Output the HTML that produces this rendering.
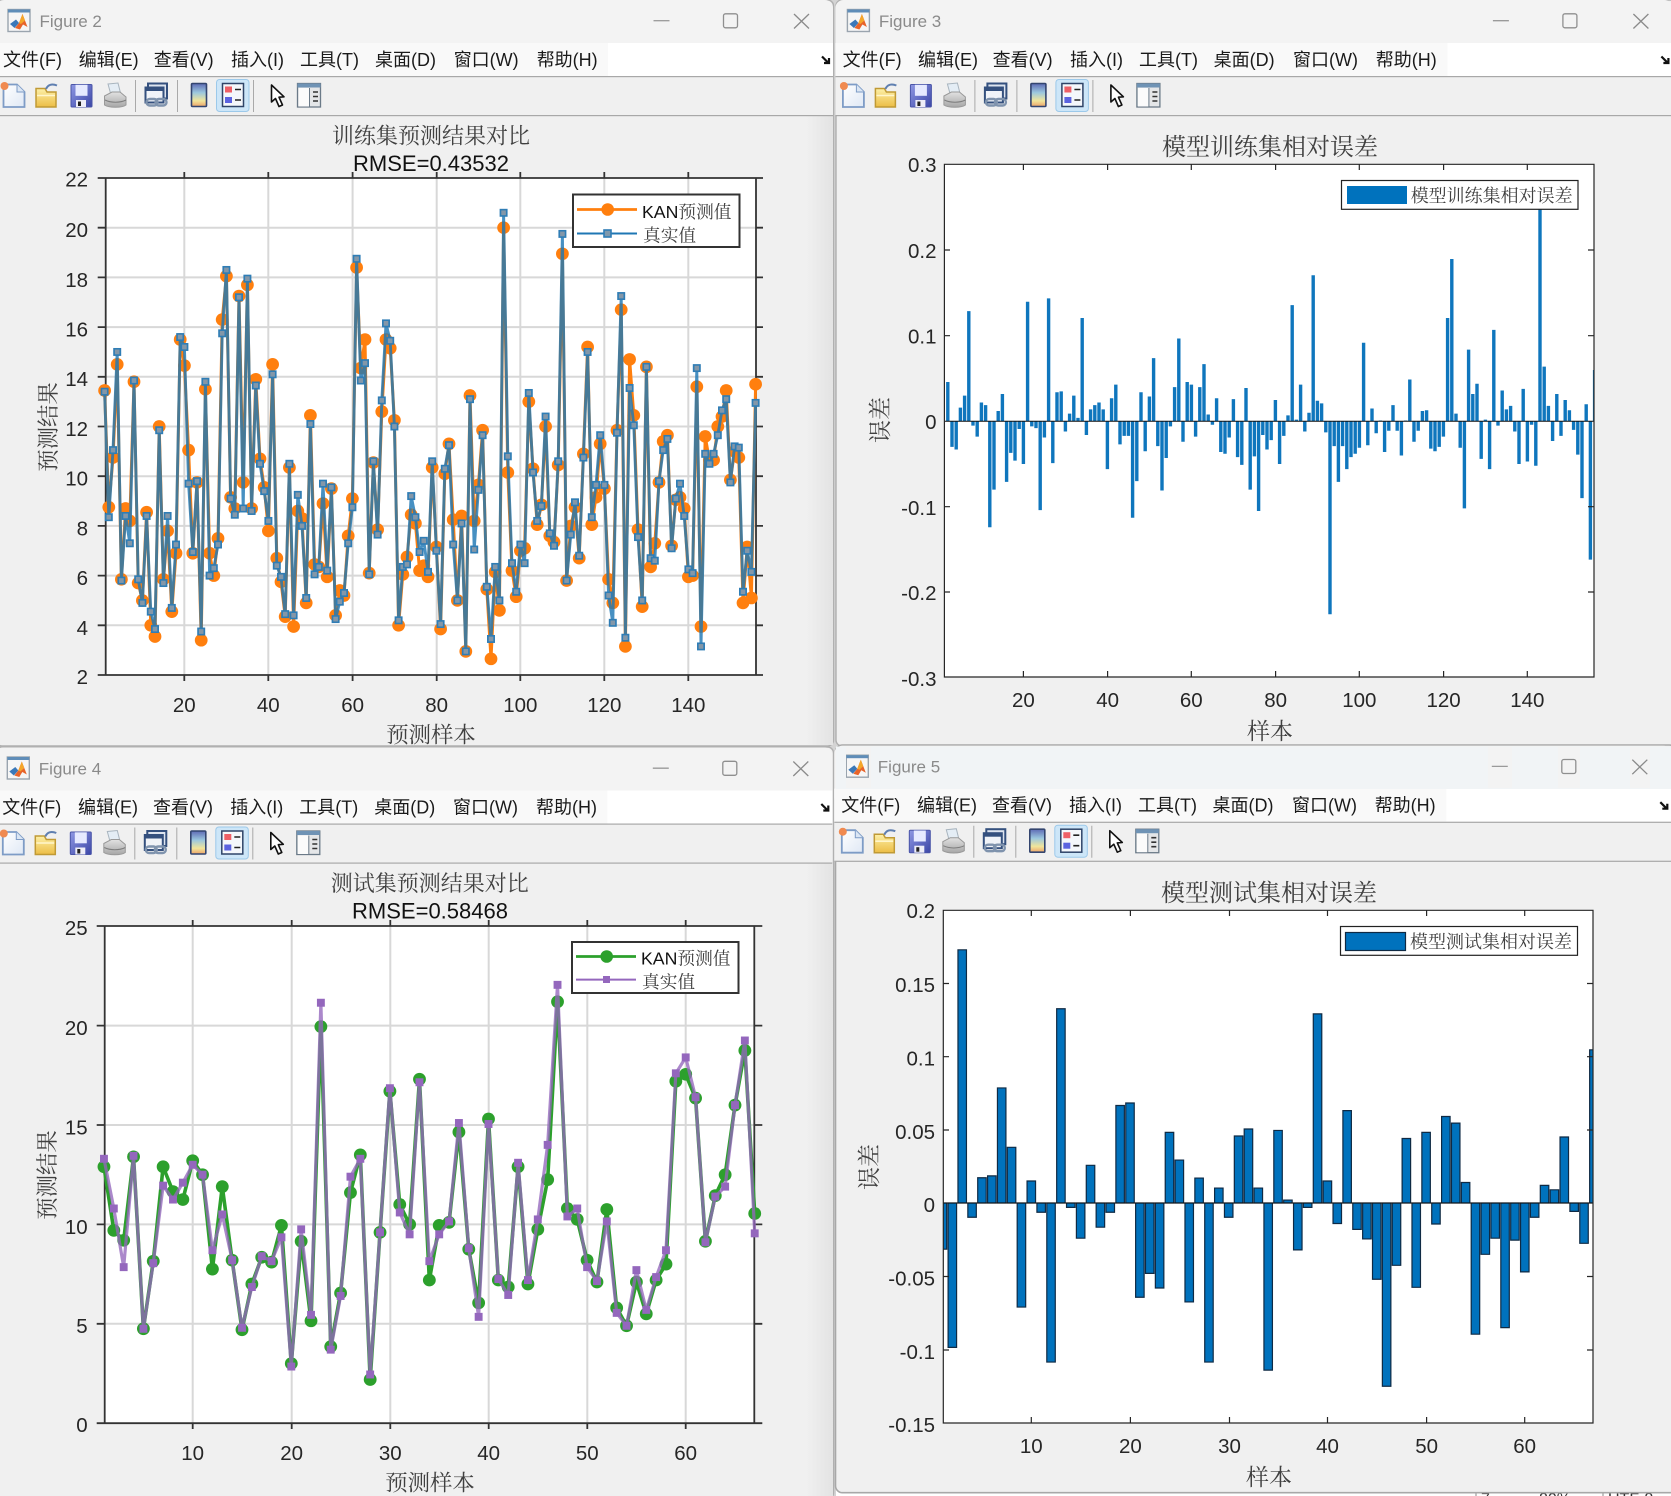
<!DOCTYPE html>
<html lang="zh">
<head>
<meta charset="utf-8">
<title>Figures</title>
<style>
html,body{margin:0;padding:0;background:#d4d4d4}
svg{display:block}
.tk{font:20.5px "Liberation Sans",sans-serif;fill:#262626}
.m{font:18px "Liberation Sans","Noto Sans CJK SC",sans-serif;fill:#1a1a1a}
.ft{font:17px "Liberation Sans",sans-serif;fill:#8a8a8a}
.s{font-family:"Liberation Serif","Noto Serif CJK SC",serif;fill:#404040}
.t{font-size:22px}
.T{font-size:24px}
.r{font:22px "Liberation Sans",sans-serif;fill:#111}
.l{font-size:22.4px}
.L{font-size:23px}
.lg{font-size:17.7px}
.lG{font-size:18px}
.k{font-family:"Liberation Sans",sans-serif;fill:#111}
.e{text-anchor:end}
.c{text-anchor:middle}
.v{vector-effect:non-scaling-stroke}
.b{font:16px "Liberation Sans",sans-serif;fill:#333}
</style>
</head>
<body>
<svg width="1671" height="1496" viewBox="0 0 1671 1496" xmlns="http://www.w3.org/2000/svg">
<defs>
<linearGradient id="cb" x1="0" y1="0" x2="0" y2="1"><stop offset="0" stop-color="#5e6bb5"/><stop offset=".4" stop-color="#9cc8de"/><stop offset=".75" stop-color="#f1e59a"/><stop offset="1" stop-color="#eda46a"/></linearGradient>
<linearGradient id="fl" x1="0" y1="0" x2="0" y2="1"><stop offset="0" stop-color="#fdf0a8"/><stop offset="1" stop-color="#ecbd45"/></linearGradient>
<linearGradient id="sv" x1="0" y1="0" x2="1" y2="1"><stop offset="0" stop-color="#8f98e4"/><stop offset="1" stop-color="#3b46a6"/></linearGradient>
<linearGradient id="shade" x1="0" y1="0" x2="1" y2="0"><stop offset="0" stop-color="#f0f0f0"/><stop offset="1" stop-color="#e3e3e3"/></linearGradient>
<linearGradient id="pr" x1="0" y1="0" x2="0" y2="1"><stop offset="0" stop-color="#e2e2e2"/><stop offset="1" stop-color="#a6a6a6"/></linearGradient>
<linearGradient id="nw" x1="0" y1="0" x2="1" y2="1"><stop offset="0" stop-color="#ffffff"/><stop offset="1" stop-color="#dfe8f5"/></linearGradient>
<marker id="co" markerUnits="userSpaceOnUse" overflow="visible" markerWidth="1" markerHeight="1" refX="0" refY="0"><ellipse rx="1.52" ry=".255" fill="#ff7f0e"/></marker>
<marker id="sb" markerUnits="userSpaceOnUse" overflow="visible" markerWidth="1" markerHeight="1" refX="0" refY="0"><rect x="-.95" y="-.16" width="1.9" height=".32" fill="#2f7db5"/><rect x="-.55" y="-.095" width="1.1" height=".19" fill="#8497a8"/></marker>
<marker id="cg" markerUnits="userSpaceOnUse" overflow="visible" markerWidth="1" markerHeight="1" refX="0" refY="0"><ellipse rx=".65" ry=".32" fill="#2ca02c"/></marker>
<marker id="sp" markerUnits="userSpaceOnUse" overflow="visible" markerWidth="1" markerHeight="1" refX="0" refY="0"><rect x="-.4" y="-.2" width=".8" height=".4" fill="#9467bd"/></marker>
<clipPath id="c3"><rect x="944.4" y="164.3" width="649.6" height="512.7"/></clipPath>
<clipPath id="c5"><rect x="943.3" y="910.3" width="649.7" height="512.7"/></clipPath>

<g id="chrome">
  <rect x="-4" y="0" width="837" height="60" rx="8" fill="#f3f3f3"/>
  <rect x="-4" y="43" width="837" height="34" fill="#fff"/>
  <rect x="-4" y="43" width="612" height="33" fill="#f9f9f9"/>
  <rect x="-4" y="76" width="837" height="40" fill="#f0f0f0"/>
  <rect x="-4" y="76" width="837" height="1.2" fill="#a8a8a8"/>
  <rect x="-4" y="115" width="837" height="1.2" fill="#a8a8a8"/>
  <!-- title buttons -->
  <path d="M653.5 20.7H669.5" stroke="#9a9a9a" stroke-width="1.3" fill="none"/>
  <rect x="723.5" y="13.8" width="14" height="14" rx="2" fill="none" stroke="#8f8f8f" stroke-width="1.3"/>
  <path d="M794 14L809 28.5M809 14L794 28.5" stroke="#8a8a8a" stroke-width="1.3" fill="none"/>
  <!-- matlab icon -->
  <rect x="8" y="9.5" width="22" height="22" fill="#f6f6f6" stroke="#9aa4ae" stroke-width="1.4"/>
  <rect x="8" y="9.5" width="22" height="3" fill="#5f8db8"/>
  <path d="M10 24L16 19.5L19 23L14.5 28Z" fill="#3b78b8"/>
  <path d="M19 23L22.5 14L27.5 27L23 24.5L20 29.5L15 28Z" fill="#e8642a"/>
  <path d="M22.5 14L25 20.5L21 24L19 23Z" fill="#f4a62a"/>
  <!-- corner arrow -->
  <path d="M822 56.5L828 62.5M824 63H829V58" stroke="#111" stroke-width="2.2" fill="none"/>
  <!-- new -->
  <path d="M3.5 84.5H17L24.5 92V107H3.5Z" fill="url(#nw)" stroke="#7e9cc6" stroke-width="1.8"/>
  <path d="M17 84.5V92H24.5" fill="#dbe6f4" stroke="#7e9cc6" stroke-width="1"/>
  <circle cx="4.5" cy="86" r="4" fill="#f08a50"/>
  <!-- open -->
  <path d="M36 88.5H45L47 92H56V107H36Z" fill="url(#fl)" stroke="#c09a35" stroke-width="1.5"/>
  <path d="M46 89C48 84.5 52 83.5 57 85.5" stroke="#5f7fb0" stroke-width="2" fill="none"/>
  <path d="M37 95.5H55" stroke="#fff6cc" stroke-width="1.6"/>
  <!-- save -->
  <rect x="71" y="84.5" width="21" height="22.5" rx="1" fill="url(#sv)" stroke="#4a55a8"/>
  <rect x="75.5" y="84.8" width="12" height="11" fill="#e6eaff"/>
  <rect x="76" y="100" width="10" height="7" fill="#eeeef8"/>
  <rect x="78" y="101.5" width="3" height="4.5" fill="#222"/>
  <!-- print -->
  <path d="M108 84L118 83L121 95H111Z" fill="#e4edf5" stroke="#a8b4be"/>
  <path d="M104.5 96L112 92H120L126 97V105C122 108 109 108 104.5 105Z" fill="url(#pr)" stroke="#999"/>
  <path d="M105 100C111 103 120 103 126 100" stroke="#7d7d7d" fill="none"/>
  <path d="M135.5 80V112M177.5 80V112M253.5 80V112" stroke="#a9a9a9" stroke-width="1"/>
  <!-- link -->
  <rect x="148" y="83.5" width="19" height="15" fill="#dde4ef" stroke="#34507e" stroke-width="2"/>
  <rect x="145.5" y="87.5" width="18" height="15" fill="#f0f3f8" stroke="#34507e" stroke-width="2"/>
  <rect x="145.5" y="87.5" width="18" height="3.5" fill="#34507e"/>
  <rect x="146.5" y="99" width="11" height="6.5" rx="3.2" fill="none" stroke="#7f93ad" stroke-width="2.4"/>
  <rect x="155.5" y="99" width="11" height="6.5" rx="3.2" fill="none" stroke="#7f93ad" stroke-width="2.4"/>
  <!-- colorbar -->
  <rect x="191.5" y="83.5" width="15" height="23" rx="1" fill="url(#cb)" stroke="#33456f" stroke-width="1.6"/>
  <!-- legend -->
  <rect x="216.5" y="79.5" width="32.5" height="32" rx="3" fill="#cde6f8" stroke="#9cc9ea"/>
  <rect x="222.5" y="83.5" width="21" height="23" fill="#f4f7fb" stroke="#2f4468" stroke-width="1.5"/>
  <rect x="225" y="86.5" width="7" height="6" fill="#ee5f66"/>
  <rect x="225" y="97" width="7" height="6" fill="#5b63e0"/>
  <path d="M235 89.5H241M235 100H241" stroke="#222" stroke-width="1.6"/>
  <!-- cursor -->
  <path d="M271.5 85V102L275.5 98.5L279 106.5L282.5 105L279 97.2L284 96.8Z" fill="#fff" stroke="#111" stroke-width="1.6" stroke-linejoin="round"/>
  <!-- panel -->
  <rect x="297.5" y="83.5" width="23" height="23.5" fill="#e4e6e8" stroke="#6b7a88" stroke-width="1.3"/>
  <rect x="297.5" y="83.5" width="23" height="4" fill="#6f93b5"/>
  <rect x="298.5" y="88" width="11" height="18.5" fill="#fbfbfb"/>
  <path d="M309.5 88V107" stroke="#6b7a88"/>
  <path d="M313 92H318M313 96.5H318M313 101H318" stroke="#333" stroke-width="1.6"/>
</g>
</defs>

<rect width="1671" height="1496" fill="#d4d4d4"/>

<!-- bottom right fragment under Figure 5 -->
<rect x="836" y="1486" width="835" height="10" fill="#fff"/>
<path d="M1476 1490V1496M1603 1490V1496" stroke="#888"/>
<text class="b" x="1481" y="1504">7</text>
<text class="b" x="1539" y="1504">80%</text>
<text class="b" x="1608" y="1504">UTF-8</text>

<!-- ================= FIGURE 2 ================= -->
<g>
<rect x="-4" y="0" width="837.5" height="746" rx="6" fill="#f0f0f0" stroke="#b0b0b0" stroke-width="1.4"/>
<rect x="806" y="116" width="27" height="629" fill="url(#shade)"/>
<use href="#chrome"/>
<text class="ft" x="39.5" y="27">Figure 2</text>
<g class="m">
<text x="3" y="66">文件(F)</text><text x="78.7" y="66">编辑(E)</text><text x="153.7" y="66">查看(V)</text><text x="231" y="66">插入(I)</text><text x="300" y="66">工具(T)</text><text x="375" y="66">桌面(D)</text><text x="453.7" y="66">窗口(W)</text><text x="536.7" y="66">帮助(H)</text>
</g>
<text class="s t c" x="431" y="143.5">训练集预测结果对比</text>
<text class="r c" x="431" y="171">RMSE=0.43532</text>
<rect x="105.7" y="178" width="650.3" height="497" fill="#fff"/>
<path d="M184.3 178V675M268.3 178V675M352.6 178V675M436.7 178V675M520.3 178V675M604.3 178V675M688.3 178V675M105.7 625.3H756M105.7 575.6H756M105.7 525.9H756M105.7 476.2H756M105.7 426.5H756M105.7 376.8H756M105.7 327.1H756M105.7 277.4H756M105.7 227.7H756" stroke="#d8d8d8" stroke-width="2" fill="none"/>
<path d="M97.7 178H763M97.7 675H763M105.7 178V675M756 178V675M184.3 172V178M268.3 172V178M352.6 172V178M436.7 172V178M520.3 172V178M604.3 172V178M688.3 172V178M184.3 675V681M268.3 675V681M352.6 675V681M436.7 675V681M520.3 675V681M604.3 675V681M688.3 675V681M97.7 625.3H105.7M97.7 575.6H105.7M97.7 525.9H105.7M97.7 476.2H105.7M97.7 426.5H105.7M97.7 376.8H105.7M97.7 327.1H105.7M97.7 277.4H105.7M97.7 227.7H105.7M756 625.3H763M756 575.6H763M756 525.9H763M756 476.2H763M756 426.5H763M756 376.8H763M756 327.1H763M756 277.4H763M756 227.7H763" stroke="#333" stroke-width="1.8" fill="none"/>
<g transform="translate(100.4 724.7) scale(4.2 -24.85)">
<polyline class="v" fill="none" stroke="#ff7f0e" stroke-width="3" stroke-linejoin="round" marker-start="url(#co)" marker-mid="url(#co)" marker-end="url(#co)" points="1,13.45 2,8.75 3,10.75 4,14.5 5,5.85 6,8.7 7,8.2 8,13.8 9,5.7 10,5 11,8.55 12,4 13,3.55 14,12 15,5.85 16,7.8 17,4.55 18,6.9 19,15.5 20,14.45 21,11.05 22,6.9 23,9.75 24,3.4 25,13.5 26,6.9 27,6 28,7.5 29,16.3 30,18.05 31,9.15 32,8.7 33,17.25 34,9.75 35,17.7 36,8.7 37,13.9 38,10.7 39,9.55 40,7.8 41,14.5 42,6.7 43,5.75 44,4.35 45,10.35 46,3.95 47,8.6 48,8.3 49,4.9 50,12.45 51,6.45 52,6.35 53,8.9 54,5.95 55,9.5 56,4.4 57,5.4 58,5.2 59,7.6 60,9.1 61,18.4 62,14.35 63,15.5 64,6.1 65,10.55 66,7.85 67,12.6 68,15.5 69,15.15 70,12.25 71,4 72,6.05 73,6.75 74,8.45 75,8.1 76,6.2 77,6.4 78,5.95 79,10.35 80,7.15 81,3.85 82,10.1 83,11.3 84,8.25 85,5 86,8.4 87,2.95 88,13.25 89,8.2 90,9.65 91,11.85 92,5.45 93,2.65 94,6.15 95,4.6 96,20 97,10.15 98,6.2 99,5.15 100,7 101,7.1 102,13 103,10.3 104,8.05 105,8.85 106,12 107,7.6 108,7.35 109,10.45 110,18.95 111,5.8 112,8 113,8.75 114,6.7 115,10.9 116,15.2 117,8.05 118,9.15 119,11.3 120,9.5 121,5.85 122,4.9 123,11.85 124,16.7 125,3.15 126,14.7 127,12.45 128,7.85 129,4.75 130,14.4 131,6.35 132,7.3 133,9.75 134,11.4 135,11.65 136,7.2 137,9.05 138,9.15 139,8.7 140,5.95 141,6 142,13.6 143,3.95 144,11.6 145,10.65 146,10.65 147,12 148,12.4 149,13.45 150,9.85 151,11 152,10.75 153,4.9 154,7.15 155,5.1 156,13.7"/>
<polyline class="v" fill="none" stroke="#1f77b4" stroke-opacity=".82" stroke-width="2.9" stroke-linejoin="round" marker-start="url(#sb)" marker-mid="url(#sb)" marker-end="url(#sb)" points="1,13.4 2,8.35 3,11.05 4,15 5,5.8 6,8.4 7,7.3 8,13.85 9,5.85 10,4.9 11,8.4 12,4.55 13,3.85 14,11.85 15,5.7 16,8.4 17,4.7 18,7.25 19,15.6 20,15.2 21,9.7 22,6.95 23,9.8 24,3.75 25,13.8 26,6 27,6.3 28,7.25 29,15.75 30,18.3 31,9.1 32,8.45 33,17.2 34,8.7 35,17.95 36,8.6 37,13.65 38,10.5 39,9.4 40,8.2 41,14.1 42,6.4 43,5.95 44,4.45 45,10.5 46,4.4 47,9.25 48,8 49,5.1 50,12.1 51,6.05 52,6.35 53,9.7 54,6.2 55,9.55 56,4.25 57,4.95 58,5.3 59,7.3 60,8.75 61,18.75 62,13.85 63,14.55 64,6.05 65,10.6 66,7.65 67,13.05 68,16.15 69,15.45 70,12 71,4.2 72,6.35 73,6.45 74,9.2 75,8.35 76,6.95 77,7.4 78,6.15 79,10.6 80,7 81,4.05 82,10.3 83,11.25 84,7.25 85,5 86,8.1 87,2.95 88,13.1 89,7.05 90,9.45 91,11.65 92,5.55 93,3.45 94,6.35 95,5 96,20.6 97,10.8 98,6.5 99,5.35 100,7.25 101,6.5 102,13.35 103,10.15 104,8.2 105,8.8 106,12.4 107,7.7 108,7.2 109,10.6 110,19.75 111,5.8 112,7.65 113,8.95 114,6.8 115,10.75 116,15 117,8.35 118,9.65 119,11.65 120,9.65 121,5.2 122,4.1 123,11.75 124,17.25 125,3.5 126,13.55 127,12.05 128,7.55 129,5 130,14.4 131,6.7 132,6.6 133,9.8 134,11.05 135,11.5 136,7.1 137,9.1 138,9.7 139,8.4 140,6.25 141,6.1 142,14.35 143,3.15 144,10.9 145,10.5 146,10.9 147,11.65 148,12.65 149,13.1 150,9.75 151,11.2 152,11.15 153,5.35 154,7 155,6.15 156,12.95"/>
</g>
<g class="tk">
<text class="e" x="88" y="186.5">22</text><text class="e" x="88" y="237">20</text><text class="e" x="88" y="287">18</text><text class="e" x="88" y="336.5">16</text><text class="e" x="88" y="386">14</text><text class="e" x="88" y="436">12</text><text class="e" x="88" y="485.5">10</text><text class="e" x="88" y="535.5">8</text><text class="e" x="88" y="585">6</text><text class="e" x="88" y="635">4</text><text class="e" x="88" y="684">2</text>
<text class="c" x="184.3" y="712">20</text><text class="c" x="268.3" y="712">40</text><text class="c" x="352.6" y="712">60</text><text class="c" x="436.7" y="712">80</text><text class="c" x="520.3" y="712">100</text><text class="c" x="604.3" y="712">120</text><text class="c" x="688.3" y="712">140</text>
</g>
<text class="s l c" transform="translate(56 427) rotate(-90)" x="0" y="0">预测结果</text>
<text class="s l c" x="431" y="742.5">预测样本</text>
<rect x="573" y="194.5" width="166.5" height="52.5" fill="#fff" stroke="#333" stroke-width="2"/>
<path d="M577 209.5H637" stroke="#ff7f0e" stroke-width="2.8"/><circle cx="607.7" cy="209.5" r="6.3" fill="#ff7f0e"/>
<path d="M577 233.5H637" stroke="#1f77b4" stroke-width="2"/><rect x="604" y="230" width="7" height="7" fill="#7f99ad" stroke="#2f7db5" stroke-width="1.6"/>
<text class="lg s" x="642" y="218"><tspan class="k">KAN</tspan>预测值</text>
<text class="lg s" x="643" y="241.5">真实值</text>
</g>

<!-- ================= FIGURE 3 ================= -->
<g>
<rect x="836" y="0" width="840" height="746" rx="6" fill="#f0f0f0" stroke="#b0b0b0" stroke-width="1.4"/>
<use href="#chrome" transform="translate(839.4 0)"/>
<text class="ft" x="878.9" y="27">Figure 3</text>
<g class="m">
<text x="842.6" y="66">文件(F)</text><text x="918" y="66">编辑(E)</text><text x="992.6" y="66">查看(V)</text><text x="1070" y="66">插入(I)</text><text x="1139" y="66">工具(T)</text><text x="1213.6" y="66">桌面(D)</text><text x="1293" y="66">窗口(W)</text><text x="1375.8" y="66">帮助(H)</text>
</g>
<text class="s T c" x="1270" y="155">模型训练集相对误差</text>
<rect x="944.4" y="164.3" width="649.6" height="512.7" fill="#fff"/>
<g clip-path="url(#c3)">
<path class="v" transform="translate(939.4 421.3) scale(4.2 -.854)" fill="none" stroke="#0f76bd" stroke-width="3.4" d="M2 0V46M3 0V-30M4 0V-33M5 0V16M6 0V30M7 0V129M8 0V-5M9 0V-18M10 0V22M11 0V19M12 0V-124M13 0V-80M14 0V12M15 0V32M16 0V-71M17 0V-37M18 0V-46M19 0V-9M20 0V-50M21 0V140M22 0V-6M23 0V-8M24 0V-104M25 0V-19M26 0V144M27 0V-49M28 0V34M29 0V35M30 0V-12M31 0V9M32 0V30M33 0V4M34 0V121M35 0V-16M36 0V14M37 0V19M38 0V22M39 0V14M40 0V-56M41 0V27M42 0V43M43 0V-27M44 0V-17M45 0V-17M46 0V-113M47 0V-70M48 0V34M49 0V-35M50 0V29M51 0V74M52 0V-29M53 0V-81M54 0V-43M55 0V-6M56 0V40M57 0V97M58 0V-24M59 0V46M60 0V43M61 0V-18M62 0V40M63 0V67M64 0V8M65 0V-4M66 0V27M67 0V-36M68 0V-38M69 0V-19M70 0V26M71 0V-42M72 0V-51M73 0V39M74 0V-80M75 0V-41M76 0V-105M77 0V-16M78 0V-33M79 0V-22M80 0V25M81 0V-50M82 0V-17M83 0V7M84 0V136M85 0V2M86 0V43M87 0V-12M88 0V10M89 0V171M90 0V24M91 0V21M92 0V-13M93 0V-226M94 0V-29M95 0V-71M96 0V-29M97 0V-56M98 0V-42M99 0V-38M100 0V-31M101 0V92M102 0V-28M103 0V15M104 0V-14M105 0V1M106 0V-36M107 0V-11M108 0V19M109 0V-11M110 0V-40M111 0V1M112 0V49M113 0V-24M114 0V-11M115 0V12M116 0V13M117 0V-32M118 0V-35M119 0V-30M120 0V-18M121 0V121M122 0V190M123 0V9M124 0V-31M125 0V-102M126 0V84M127 0V32M128 0V44M129 0V-44M130 0V2M131 0V-56M132 0V107M133 0V-5M134 0V36M135 0V14M136 0V18M137 0V-12M138 0V-50M139 0V38M140 0V-47M141 0V-4M142 0V-52M143 0V280M144 0V64M145 0V18M146 0V-23M147 0V32M148 0V-17M149 0V25M150 0V13M151 0V-10M152 0V-39M153 0V-90M154 0V20M155 0V-162M156 0V60"/>
</g>
<path d="M944.4 421.3H1594" stroke="#111" stroke-width="1"/>
<path d="M944.4 164.3H1594V677H944.4ZM1023.4 164.3V170M1107.6 164.3V170M1191.3 164.3V170M1275.6 164.3V170M1359.3 164.3V170M1443.6 164.3V170M1527.3 164.3V170M1023.4 677V671M1107.6 677V671M1191.3 677V671M1275.6 677V671M1359.3 677V671M1443.6 677V671M1527.3 677V671M944.4 250H950M944.4 335.7H950M944.4 506.7H950M944.4 592H950M1594 250H1588M1594 335.7H1588M1594 506.7H1588M1594 592H1588" stroke="#262626" stroke-width="1.2" fill="none"/>
<g class="tk">
<text class="e" x="936.5" y="172">0.3</text><text class="e" x="936.5" y="258">0.2</text><text class="e" x="936.5" y="343.5">0.1</text><text class="e" x="936.5" y="429">0</text><text class="e" x="936.5" y="515">-0.1</text><text class="e" x="936.5" y="600">-0.2</text><text class="e" x="936.5" y="686">-0.3</text>
<text class="c" x="1023.4" y="707">20</text><text class="c" x="1107.6" y="707">40</text><text class="c" x="1191.3" y="707">60</text><text class="c" x="1275.6" y="707">80</text><text class="c" x="1359.3" y="707">100</text><text class="c" x="1443.6" y="707">120</text><text class="c" x="1527.3" y="707">140</text>
</g>
<text class="s L c" transform="translate(888 420) rotate(-90)" x="0" y="0">误差</text>
<text class="s L c" x="1270" y="739">样本</text>
<rect x="1341.5" y="180.5" width="236.5" height="28.8" fill="#fff" stroke="#222" stroke-width="1.2"/>
<rect x="1347" y="186" width="60" height="18" fill="#0072bd"/>
<text class="s lG" x="1410.7" y="202">模型训练集相对误差</text>
</g>

<!-- ================= FIGURE 4 ================= -->
<g>
<rect x="-4" y="747" width="837.5" height="752" rx="6" fill="#f0f0f0" stroke="#b0b0b0" stroke-width="1.4"/>
<rect x="806" y="863" width="27" height="633" fill="url(#shade)"/>
<use href="#chrome" transform="translate(-.7 747.5)"/>
<text class="ft" x="38.8" y="774.5">Figure 4</text>
<g class="m">
<text x="2.3" y="813.5">文件(F)</text><text x="78" y="813.5">编辑(E)</text><text x="153" y="813.5">查看(V)</text><text x="230.3" y="813.5">插入(I)</text><text x="299.3" y="813.5">工具(T)</text><text x="374.3" y="813.5">桌面(D)</text><text x="453" y="813.5">窗口(W)</text><text x="536" y="813.5">帮助(H)</text>
</g>
<text class="s t c" x="429.7" y="891">测试集预测结果对比</text>
<text class="r c" x="430" y="918.5">RMSE=0.58468</text>
<rect x="104.7" y="926" width="649.6" height="497.2" fill="#fff"/>
<path d="M192.7 926V1423M291.7 926V1423M390.3 926V1423M488.7 926V1423M587.3 926V1423M685.7 926V1423M104.7 1323.8H754.3M104.7 1224.4H754.3M104.7 1125H754.3M104.7 1025.6H754.3" stroke="#d8d8d8" stroke-width="2" fill="none"/>
<path d="M96.7 926H762.3M96.7 1423.2H762.3M104.7 926V1423.2M754.3 926V1423.2M192.7 920V926M291.7 920V926M390.3 920V926M488.7 920V926M587.3 920V926M685.7 920V926M192.7 1423V1429M291.7 1423V1429M390.3 1423V1429M488.7 1423V1429M587.3 1423V1429M685.7 1423V1429M96.7 1323.8H104.7M96.7 1224.4H104.7M96.7 1125H104.7M96.7 1025.6H104.7M754.3 1323.8H762.3M754.3 1224.4H762.3M754.3 1125H762.3M754.3 1025.6H762.3" stroke="#333" stroke-width="1.8" fill="none"/>
<g transform="translate(94.1 1423.2) scale(9.86 -19.88)">
<polyline class="v" fill="none" stroke="#2ca02c" stroke-width="3.6" stroke-linejoin="round" marker-start="url(#cg)" marker-mid="url(#cg)" marker-end="url(#cg)" points="1,12.9 2,9.7 3,9.2 4,13.4 5,4.75 6,8.15 7,12.9 8,11.65 9,11.25 10,13.2 11,12.5 12,7.75 13,11.9 14,8.2 15,4.7 16,7 17,8.35 18,8.1 19,9.95 20,3 21,9.15 22,5.15 23,19.95 24,3.85 25,6.55 26,11.6 27,13.5 28,2.2 29,9.6 30,16.7 31,11 32,10 33,17.3 34,7.2 35,9.95 36,10.1 37,14.65 38,8.75 39,6.05 40,15.3 41,7.2 42,6.85 43,12.9 44,7 45,9.75 46,12.25 47,21.2 48,10.8 49,10.25 50,8.2 51,7.1 52,10.75 53,5.8 54,4.9 55,7.1 56,5.5 57,7.2 58,8 59,17.2 60,17.55 61,16.35 62,9.15 63,11.45 64,12.5 65,16 66,18.75 67,10.55"/>
<polyline class="v" fill="none" stroke="#9467bd" stroke-opacity=".78" stroke-width="3.2" stroke-linejoin="round" marker-start="url(#sp)" marker-mid="url(#sp)" marker-end="url(#sp)" points="1,13.3 2,10.8 3,7.85 4,13.45 5,4.75 6,8.05 7,11.95 8,11.25 9,12.1 10,13 11,12.5 12,8.7 13,10.5 14,8.2 15,4.8 16,6.85 17,8.4 18,8.15 19,9.35 20,2.85 21,9.75 22,5.45 23,21.15 24,3.7 25,6.4 26,12.4 27,13.3 28,2.45 29,9.6 30,16.85 31,10.6 32,9.5 33,17.15 34,8.15 35,9.5 36,10.15 37,15.1 38,8.8 39,5.35 40,15.05 41,7.25 42,6.45 43,13.1 44,7.2 45,10.25 46,14 47,22.05 48,10.4 49,10.8 50,7.85 51,7.15 52,10.15 53,5.55 54,4.9 55,7.7 56,5.7 57,7.35 58,8.7 59,17.6 60,18.4 61,16.4 62,9.1 63,11.4 64,11.9 65,16 66,19.25 67,9.55"/>
</g>
<g class="tk">
<text class="e" x="87.7" y="935">25</text><text class="e" x="87.7" y="1035">20</text><text class="e" x="87.7" y="1134.5">15</text><text class="e" x="87.7" y="1234">10</text><text class="e" x="87.7" y="1333">5</text><text class="e" x="87.7" y="1432">0</text>
<text class="c" x="192.7" y="1460">10</text><text class="c" x="291.7" y="1460">20</text><text class="c" x="390.3" y="1460">30</text><text class="c" x="488.7" y="1460">40</text><text class="c" x="587.3" y="1460">50</text><text class="c" x="685.7" y="1460">60</text>
</g>
<text class="s l c" transform="translate(55 1175) rotate(-90)" x="0" y="0">预测结果</text>
<text class="s l c" x="430" y="1490.5">预测样本</text>
<rect x="572" y="942" width="166.5" height="51" fill="#fff" stroke="#333" stroke-width="2"/>
<path d="M576 956.5H636" stroke="#2ca02c" stroke-width="2.8"/><circle cx="606.7" cy="956.5" r="6.3" fill="#2ca02c"/>
<path d="M576 979.6H636" stroke="#9467bd" stroke-width="2"/><rect x="603" y="976" width="7" height="7" fill="#9467bd"/>
<text class="lg s" x="641" y="964.5"><tspan class="k">KAN</tspan>预测值</text>
<text class="lg s" x="642" y="988">真实值</text>
</g>

<!-- ================= FIGURE 5 ================= -->
<g>
<rect x="835.5" y="745" width="841" height="747.7" rx="7" fill="#f0f0f0" stroke="#a8a8a8" stroke-width="1.6"/>
<use href="#chrome" transform="translate(838.3 745.7)"/>
<path d="M836 746.5H1676V789H836ZM846 747V788H871V747ZM1488 747V788H1512V747ZM1558 747V788H1580V747ZM1630 747V788H1650V747Z" fill="#f1f4f6" fill-rule="evenodd"/>
<text class="ft" x="877.8" y="772.7">Figure 5</text>
<g class="m">
<text x="841.3" y="811.7">文件(F)</text><text x="917" y="811.7">编辑(E)</text><text x="992" y="811.7">查看(V)</text><text x="1069" y="811.7">插入(I)</text><text x="1138" y="811.7">工具(T)</text><text x="1212.5" y="811.7">桌面(D)</text><text x="1292" y="811.7">窗口(W)</text><text x="1374.7" y="811.7">帮助(H)</text>
</g>
<text class="s T c" x="1269" y="901">模型测试集相对误差</text>
<rect x="943.3" y="910.3" width="649.7" height="512.7" fill="#fff"/>
<g clip-path="url(#c5)">
<path class="v" transform="translate(932.6 1203) scale(9.87 -1.466)" fill="#0072bd" stroke="#0f2a44" stroke-width="1.2" d="M.57 0V-31.5h.86V0zM1.57 0V-98.5h.86V0zM2.57 0V172.7h.86V0zM3.57 0V-9.7h.86V0zM4.57 0V17.2h.86V0zM5.57 0V18.5h.86V0zM6.57 0V78.5h.86V0zM7.57 0V38h.86V0zM8.57 0V-71h.86V0zM9.57 0V15h.86V0zM10.57 0V-6.3h.86V0zM11.57 0V-108.5h.86V0zM12.57 0V132.5h.86V0zM13.57 0V-3h.86V0zM14.57 0V-24h.86V0zM15.57 0V25.7h.86V0zM16.57 0V-16.5h.86V0zM17.57 0V-6.3h.86V0zM18.57 0V66.5h.86V0zM19.57 0V68.2h.86V0zM20.57 0V-64.3h.86V0zM21.57 0V-48h.86V0zM22.57 0V-58h.86V0zM23.57 0V48.2h.86V0zM24.57 0V29.3h.86V0zM25.57 0V-67.5h.86V0zM26.57 0V17h.86V0zM27.57 0V-108.5h.86V0zM28.57 0V10.2h.86V0zM29.57 0V-9.7h.86V0zM30.57 0V45.7h.86V0zM31.57 0V50.5h.86V0zM32.57 0V10.2h.86V0zM33.57 0V-114h.86V0zM34.57 0V49.5h.86V0zM35.57 0V2h.86V0zM36.57 0V-32h.86V0zM37.57 0V-3h.86V0zM38.57 0V129h.86V0zM39.57 0V15h.86V0zM40.57 0V-14h.86V0zM41.57 0V63h.86V0zM42.57 0V-18h.86V0zM43.57 0V-24.5h.86V0zM44.57 0V-52h.86V0zM45.57 0V-125h.86V0zM46.57 0V-42.5h.86V0zM47.57 0V44h.86V0zM48.57 0V-57.5h.86V0zM49.57 0V48.2h.86V0zM50.57 0V-14.3h.86V0zM51.57 0V59h.86V0zM52.57 0V54.5h.86V0zM53.57 0V14h.86V0zM54.57 0V-89.5h.86V0zM55.57 0V-35h.86V0zM56.57 0V-24h.86V0zM57.57 0V-85h.86V0zM58.57 0V-25.3h.86V0zM59.57 0V-47h.86V0zM60.57 0V-9.7h.86V0zM61.57 0V12h.86V0zM62.57 0V9h.86V0zM63.57 0V45h.86V0zM64.57 0V-5.7h.86V0zM65.57 0V-27.5h.86V0zM66.57 0V104.5h.86V0z"/>
</g>
<path d="M943.3 1203H1593" stroke="#111" stroke-width="1"/>
<path d="M943.3 910.3H1593V1423H943.3ZM1031.3 910.3V916M1130.4 910.3V916M1229.5 910.3V916M1327.5 910.3V916M1426.6 910.3V916M1524.7 910.3V916M1031.3 1423V1417M1130.4 1423V1417M1229.5 1423V1417M1327.5 1423V1417M1426.6 1423V1417M1524.7 1423V1417M943.3 983.5H949M943.3 1056.7H949M943.3 1130H949M943.3 1276.5H949M943.3 1350H949M1593 983.5H1587M1593 1056.7H1587M1593 1130H1587M1593 1276.5H1587M1593 1350H1587" stroke="#262626" stroke-width="1.2" fill="none"/>
<g class="tk">
<text class="e" x="935" y="918">0.2</text><text class="e" x="935" y="992">0.15</text><text class="e" x="935" y="1065.7">0.1</text><text class="e" x="935" y="1139">0.05</text><text class="e" x="935" y="1212">0</text><text class="e" x="935" y="1285.5">-0.05</text><text class="e" x="935" y="1359">-0.1</text><text class="e" x="935" y="1432">-0.15</text>
<text class="c" x="1031.3" y="1453">10</text><text class="c" x="1130.4" y="1453">20</text><text class="c" x="1229.5" y="1453">30</text><text class="c" x="1327.5" y="1453">40</text><text class="c" x="1426.6" y="1453">50</text><text class="c" x="1524.7" y="1453">60</text>
</g>
<text class="s L c" transform="translate(877 1167) rotate(-90)" x="0" y="0">误差</text>
<text class="s L c" x="1269" y="1485">样本</text>
<rect x="1340.5" y="926.5" width="237" height="28.8" fill="#fff" stroke="#222" stroke-width="1.2"/>
<rect x="1345.5" y="932.5" width="60" height="18" fill="#0072bd" stroke="#0f2a44" stroke-width="1.2"/>
<text class="s lG" x="1410" y="948">模型测试集相对误差</text>
</g>
</svg>
</body>
</html>
